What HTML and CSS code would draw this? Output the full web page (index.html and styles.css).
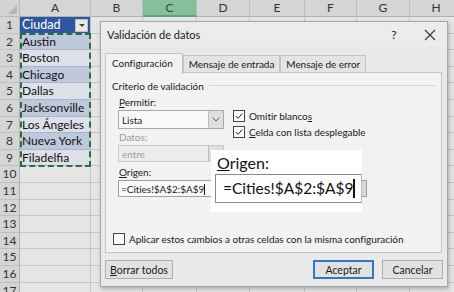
FILE: index.html
```html
<!DOCTYPE html>
<html lang="es">
<head>
    <meta charset="UTF-8">
    <title>Validación de datos</title>
    <link rel="stylesheet" href="styles.css">
</head>
<body>
    <div class="sheet">
        <div class="corner"><span class="corner-tri"></span></div>
        <div class="col-head">A</div>
        <div class="col-head">B</div>
        <div class="col-head col-sel">C</div>
        <div class="col-head">D</div>
        <div class="col-head">E</div>
        <div class="col-head">F</div>
        <div class="col-head">G</div>
        <div class="col-head">H</div>

        <div class="row-head">1</div>
        <div class="cell table-head">Ciudad<span class="filter-btn"><span class="tri"></span></span></div>
        <div class="cell"></div><div class="cell"></div><div class="cell"></div><div class="cell"></div><div class="cell"></div><div class="cell"></div><div class="cell"></div>

        <div class="row-head">2</div>
        <div class="cell band-a">Austin</div>
        <div class="cell"></div><div class="cell"></div><div class="cell"></div><div class="cell"></div><div class="cell"></div><div class="cell"></div><div class="cell"></div>

        <div class="row-head">3</div>
        <div class="cell band-b">Boston</div>
        <div class="cell"></div><div class="cell"></div><div class="cell"></div><div class="cell"></div><div class="cell"></div><div class="cell"></div><div class="cell"></div>

        <div class="row-head">4</div>
        <div class="cell band-a">Chicago</div>
        <div class="cell"></div><div class="cell"></div><div class="cell"></div><div class="cell"></div><div class="cell"></div><div class="cell"></div><div class="cell"></div>

        <div class="row-head">5</div>
        <div class="cell band-b">Dallas</div>
        <div class="cell"></div><div class="cell"></div><div class="cell"></div><div class="cell"></div><div class="cell"></div><div class="cell"></div><div class="cell"></div>

        <div class="row-head">6</div>
        <div class="cell band-a">Jacksonville</div>
        <div class="cell"></div><div class="cell"></div><div class="cell"></div><div class="cell"></div><div class="cell"></div><div class="cell"></div><div class="cell"></div>

        <div class="row-head">7</div>
        <div class="cell band-b">Los Ángeles</div>
        <div class="cell"></div><div class="cell"></div><div class="cell"></div><div class="cell"></div><div class="cell"></div><div class="cell"></div><div class="cell"></div>

        <div class="row-head">8</div>
        <div class="cell band-a">Nueva York</div>
        <div class="cell"></div><div class="cell"></div><div class="cell"></div><div class="cell"></div><div class="cell"></div><div class="cell"></div><div class="cell"></div>

        <div class="row-head">9</div>
        <div class="cell band-b">Filadelfia</div>
        <div class="cell"></div><div class="cell"></div><div class="cell"></div><div class="cell"></div><div class="cell"></div><div class="cell"></div><div class="cell"></div>

        <div class="row-head">10</div>
        <div class="cell"></div><div class="cell"></div><div class="cell"></div><div class="cell"></div><div class="cell"></div><div class="cell"></div><div class="cell"></div><div class="cell"></div>
        <div class="row-head">11</div>
        <div class="cell"></div><div class="cell"></div><div class="cell"></div><div class="cell"></div><div class="cell"></div><div class="cell"></div><div class="cell"></div><div class="cell"></div>
        <div class="row-head">12</div>
        <div class="cell"></div><div class="cell"></div><div class="cell"></div><div class="cell"></div><div class="cell"></div><div class="cell"></div><div class="cell"></div><div class="cell"></div>
        <div class="row-head">13</div>
        <div class="cell"></div><div class="cell"></div><div class="cell"></div><div class="cell"></div><div class="cell"></div><div class="cell"></div><div class="cell"></div><div class="cell"></div>
        <div class="row-head">14</div>
        <div class="cell"></div><div class="cell"></div><div class="cell"></div><div class="cell"></div><div class="cell"></div><div class="cell"></div><div class="cell"></div><div class="cell"></div>
        <div class="row-head">15</div>
        <div class="cell"></div><div class="cell"></div><div class="cell"></div><div class="cell"></div><div class="cell"></div><div class="cell"></div><div class="cell"></div><div class="cell"></div>
        <div class="row-head">16</div>
        <div class="cell"></div><div class="cell"></div><div class="cell"></div><div class="cell"></div><div class="cell"></div><div class="cell"></div><div class="cell"></div><div class="cell"></div>
        <div class="row-head">17</div>
        <div class="cell"></div><div class="cell"></div><div class="cell"></div><div class="cell"></div><div class="cell"></div><div class="cell"></div><div class="cell"></div><div class="cell"></div>
    </div>

    <!-- copied range: marching ants -->
    <div class="copy-marquee"></div>

    <div class="dialog">
        <div class="dialog-title">
            <span class="title-text">Validación de datos</span>
            <span class="title-help">?</span>
            <span class="title-close">
                <svg width="12" height="12" viewBox="0 0 12 12"><path d="M1 1 L11 11 M11 1 L1 11" stroke="#333" stroke-width="1.1" fill="none"/></svg>
            </span>
        </div>

        <div class="tabs">
            <div class="tab active">Configuración</div>
            <div class="tab">Mensaje de entrada</div>
            <div class="tab">Mensaje de error</div>
        </div>

        <div class="panel">
            <div class="group-title"><span>Criterio de validación</span><span class="group-line"></span></div>

            <div class="form-row">
                <div class="form-left">
                    <div class="label"><u>P</u>ermitir:</div>
                    <div class="select">
                        <span>Lista</span>
                        <span class="select-btn"><svg width="8" height="5" viewBox="0 0 8 5"><path d="M0.5 0.5 L4 4 L7.5 0.5" stroke="#555" fill="none"/></svg></span>
                    </div>
                    <div class="label disabled">Datos:</div>
                    <div class="select disabled">
                        <span>entre</span>
                        <span class="select-btn"></span>
                    </div>
                </div>
                <div class="form-right">
                    <label class="check"><span class="box"><svg width="10" height="10" viewBox="0 0 10 10"><path d="M1.8 5 L4 7.3 L8.3 2.5" stroke="#222" stroke-width="1" fill="none"/></svg></span><span>Omitir blanco<u>s</u></span></label>
                    <label class="check"><span class="box"><svg width="10" height="10" viewBox="0 0 10 10"><path d="M1.8 5 L4 7.3 L8.3 2.5" stroke="#222" stroke-width="1" fill="none"/></svg></span><span><u>C</u>elda con lista desplegable</span></label>
                </div>
            </div>

            <div class="label origen-label"><u>O</u>rigen:</div>
            <div class="origen-input">
                <span>=Cities!$A$2:$A$9<span class="caret"></span></span>
                <span class="range-btn"></span>
            </div>

            <label class="check apply"><span class="box"></span><span>Aplicar estos cambios a otras celdas con la misma configuración</span></label>
        </div>

        <div class="buttons">
            <button class="btn wide"><u>B</u>orrar todos</button>
            <span class="spacer"></span>
            <button class="btn primary">Aceptar</button>
            <button class="btn">Cancelar</button>
        </div>
    </div>

    <!-- zoomed callout of the Origen field -->
    <div class="magnifier">
        <div class="mag-label"><u>O</u>rigen:</div>
        <div class="mag-input">=Cities!$A$2:$A$9<span class="mag-caret"></span></div>
    </div>
</body>
</html>
```

FILE: styles.css
```css
body {
    margin: 0;
    width: 454px;
    height: 292px;
    overflow: hidden;
    position: relative;
    background-color: #e2e2e2;
    font-family: Lato, "Open Sans", sans-serif;
}

/* spreadsheet */
.sheet {
    display: grid;
    grid-template-columns: 20px 71px 52px 54px 53px 55px 52px 53px 53px;
    grid-template-rows: 17px repeat(17, 16.6px);
}

.corner {
    background-color: #d3d3d3;
    border-right: 1px solid #b8b8b8;
    border-bottom: 1px solid #b8b8b8;
    position: relative;
}

.corner-tri {
    position: absolute;
    right: 2px;
    bottom: 2px;
    width: 0;
    height: 0;
    border-left: 9px solid transparent;
    border-bottom: 9px solid #b6b6b6;
}

.col-head {
    background-color: #d5d5d5;
    border-right: 1px solid #bcbcbc;
    border-bottom: 1px solid #b0b0b0;
    font-size: 12px;
    color: #333;
    text-align: center;
    line-height: 16px;
}

.col-sel {
    background-color: #86c09a;
    color: #2c4a36;
    border-bottom: 2px solid #5ea37a;
}

.row-head {
    background-color: #d5d5d5;
    border-right: 1px solid #b0b0b0;
    border-bottom: 1px solid #c0c0c0;
    font-size: 12px;
    color: #333;
    text-align: center;
    line-height: 16px;
}

.cell {
    background-color: #e5e5e5;
    border-right: 1px solid #c6c6c6;
    border-bottom: 1px solid #c6c6c6;
    font-size: 12px;
    color: #111;
    line-height: 16px;
    padding-left: 2px;
    white-space: nowrap;
    overflow: hidden;
}

.table-head {
    background-color: #2f56a0;
    color: #fff;
    position: relative;
    font-size: 12.5px;
}

.filter-btn {
    position: absolute;
    right: 2px;
    top: 2px;
    width: 11px;
    height: 11px;
    background-color: #e8e8e8;
    border: 1px solid #c0c0c0;
}

.filter-btn .tri {
    position: absolute;
    left: 3px;
    top: 4px;
    width: 0;
    height: 0;
    border-left: 3px solid transparent;
    border-right: 3px solid transparent;
    border-top: 3px solid #444;
}

.band-a {
    background-color: #bec9de;
    border-bottom-color: #aab5cc;
}

.band-b {
    background-color: #dde0e8;
    border-bottom-color: #aab5cc;
}

.copy-marquee {
    position: absolute;
    left: 20px;
    top: 33px;
    width: 67px;
    height: 130px;
    border: 2px dashed #24703f;
}

/* dialog window */
.dialog {
    position: absolute;
    left: 100px;
    top: 21px;
    width: 346px;
    height: 264px;
    background-color: #e9e9e9;
    border: 1px solid #a8a8a8;
    box-shadow: 1px 2px 4px rgba(0, 0, 0, 0.25);
    display: flex;
    flex-direction: column;
    font-size: 10px;
    letter-spacing: -0.05px;
    color: #1a1a1a;
}

.dialog-title {
    display: flex;
    align-items: center;
    height: 25px;
    padding: 0 0 0 6px;
    background-color: #ececec;
}

.title-text {
    flex: 1;
    font-size: 11px;
    letter-spacing: 0;
}

.title-help {
    width: 38px;
    text-align: center;
    font-size: 12px;
}

.title-close {
    width: 34px;
    display: flex;
    justify-content: center;
}

.tabs {
    display: flex;
    margin: 6px 0 0 4px;
    height: 19px;
    position: relative;
    z-index: 1;
}

.tab {
    padding: 0 5px;
    border: 1px solid #c4c4c4;
    border-bottom: none;
    background-color: #e4e4e4;
    line-height: 17px;
    margin-top: 2px;
}

.tab.active {
    background-color: #f2f2f2;
    margin-top: 0;
    padding: 0 9px 0 6px;
    height: 20px;
    line-height: 19px;
}

.panel {
    margin: 0 5px 0 4px;
    height: 181px;
    background-color: #f2f2f2;
    border: 1px solid #c4c4c4;
    padding: 4px 6px 0 6px;
    box-sizing: border-box;
}

.group-title {
    display: flex;
    align-items: center;
    gap: 5px;
    height: 17px;
}

.group-line {
    flex: 1;
    border-top: 1px solid #d2d2d2;
}

.form-row {
    display: flex;
    padding-left: 6px;
}

.form-left {
    width: 106px;
}

.label {
    height: 16px;
    line-height: 17px;
    padding-left: 1px;
}

.label.disabled {
    color: #9a9a9a;
}

.select {
    display: flex;
    align-items: center;
    justify-content: space-between;
    height: 17px;
    border: 1px solid #aaa;
    background-color: #f8f8f8;
    padding-left: 3px;
}

.select.disabled {
    border-color: #cacaca;
    background-color: #ececec;
    color: #a0a0a0;
    height: 15px;
}

.select.disabled .select-btn {
    height: 15px;
}

.select-btn {
    width: 14px;
    height: 17px;
    background-color: #dedede;
    border-left: 1px solid #bdbdbd;
    display: flex;
    align-items: center;
    justify-content: center;
}

.form-right {
    padding-left: 9px;
    padding-top: 14px;
}

.check {
    display: flex;
    align-items: center;
    gap: 4px;
    height: 16px;
    white-space: nowrap;
}

.box {
    width: 10px;
    height: 10px;
    border: 1px solid #444;
    background-color: #fafafa;
    display: inline-flex;
}

.origen-label {
    margin-left: 6px;
    margin-top: 2px;
}

.origen-input {
    margin-left: 6px;
    width: 245px;
    height: 15px;
    border: 1px solid #a0a0a0;
    background-color: #fafafa;
    display: flex;
    align-items: center;
    justify-content: space-between;
    padding-left: 2px;
    font-size: 10px;
    white-space: nowrap;
}

.caret {
    display: inline-block;
    width: 1px;
    height: 11px;
    background-color: #111;
    vertical-align: -2px;
}

.range-btn {
    width: 11px;
    height: 15px;
    background-color: #d8d8d8;
    border-left: 1px solid #b8b8b8;
}

.check.apply {
    margin-top: 34px;
    margin-left: 1px;
}

.buttons {
    display: flex;
    gap: 8px;
    margin: 7px 4px 0 4px;
}

.spacer {
    flex: 1;
}

.btn {
    height: 19px;
    padding: 0;
    width: 61px;
    font: inherit;
    font-size: 10.5px;
    background-color: #e1e1e1;
    border: 1px solid #adadad;
    color: #1a1a1a;
}

.btn.wide {
    width: 68px;
}

.btn.primary {
    border: 2px solid #2f76c7;
}

/* zoom callout */
.magnifier {
    position: absolute;
    left: 211px;
    top: 150px;
    width: 151px;
    height: 62px;
    background-color: #fff;
    padding: 4px 0 0 4px;
    box-sizing: border-box;
}

.mag-label {
    font-size: 16px;
    line-height: 18px;
    margin-left: 2px;
    color: #111;
}

.mag-input {
    margin-top: 2px;
    height: 27px;
    border: 1px solid #8a8a8a;
    border-right-color: #bbb;
    font-size: 15.5px;
    line-height: 27px;
    padding-left: 7px;
    color: #111;
    white-space: nowrap;
}

.mag-caret {
    display: inline-block;
    width: 1.5px;
    height: 19px;
    background-color: #111;
    vertical-align: -4px;
}
```
